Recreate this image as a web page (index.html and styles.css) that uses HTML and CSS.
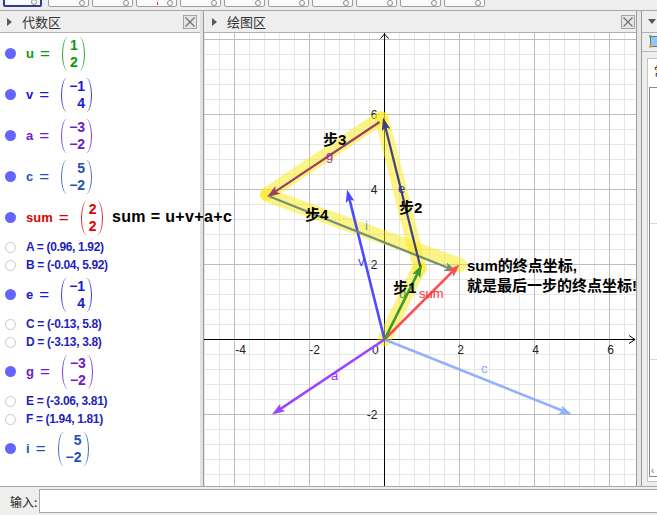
FILE: index.html
```html
<!DOCTYPE html>
<html lang="zh">
<head>
<meta charset="utf-8">
<title>GeoGebra</title>
<link rel="stylesheet" href="styles.css">
</head>
<body>
<div class="app">
  <div class="toolbar">
    <div class="tool sel"></div>
    <div class="tool"></div>
    <div class="tool"></div>
    <div class="tool mark"></div>
    <div class="tool"></div>
    <div class="tool"></div>
    <div class="tool"></div>
    <div class="tool"></div>
    <div class="tool"></div>
    <div class="tool"></div>
    <div class="tool"></div>
  </div>

  <div class="main">
    <section class="algebra">
      <div class="phead">
        <span class="tri"></span><span class="ptitle">代数区</span>
        <svg class="close" width="14" height="14" viewBox="0 0 14 14"><rect x="0.5" y="0.5" width="13" height="13" fill="#e4e4e4" stroke="#a4a4a4"/><path d="M2.5 2.5L11.5 11.5M11.5 2.5L2.5 11.5" stroke="#6e6e6e" stroke-width="1.1"/></svg>
      </div>
      <div class="alist">
        <div class="row vec c-u"><span class="dot"></span><span class="nm">u</span><span class="eq">=</span><span class="mat"><span>1</span><span>2</span></span></div>
        <div class="row vec c-v"><span class="dot"></span><span class="nm">v</span><span class="eq">=</span><span class="mat"><span>−1</span><span>4</span></span></div>
        <div class="row vec c-a"><span class="dot"></span><span class="nm">a</span><span class="eq">=</span><span class="mat"><span>−3</span><span>−2</span></span></div>
        <div class="row vec c-c"><span class="dot"></span><span class="nm">c</span><span class="eq">=</span><span class="mat"><span>5</span><span>−2</span></span></div>
        <div class="row vec c-sum"><span class="dot"></span><span class="nm">sum</span><span class="eq">=</span><span class="mat"><span>2</span><span>2</span></span></div>
        <div class="row pt"><span class="ring"></span><span class="ptxt">A = (0.96, 1.92)</span></div>
        <div class="row pt"><span class="ring"></span><span class="ptxt">B = (-0.04, 5.92)</span></div>
        <div class="row vec c-v"><span class="dot"></span><span class="nm">e</span><span class="eq">=</span><span class="mat"><span>−1</span><span>4</span></span></div>
        <div class="row pt"><span class="ring"></span><span class="ptxt">C = (-0.13, 5.8)</span></div>
        <div class="row pt"><span class="ring"></span><span class="ptxt">D = (-3.13, 3.8)</span></div>
        <div class="row vec c-a"><span class="dot"></span><span class="nm">g</span><span class="eq">=</span><span class="mat"><span>−3</span><span>−2</span></span></div>
        <div class="row pt"><span class="ring"></span><span class="ptxt">E = (-3.06, 3.81)</span></div>
        <div class="row pt"><span class="ring"></span><span class="ptxt">F = (1.94, 1.81)</span></div>
        <div class="row vec c-c"><span class="dot"></span><span class="nm">i</span><span class="eq">=</span><span class="mat"><span>5</span><span>−2</span></span></div>
      </div>
    </section>

    <div class="split"></div>

    <section class="graphics">
      <div class="phead gphead">
        <span class="tri"></span><span class="ptitle">绘图区</span>
        <svg class="close" width="14" height="14" viewBox="0 0 14 14"><rect x="0.5" y="0.5" width="13" height="13" fill="#e4e4e4" stroke="#a4a4a4"/><path d="M2.5 2.5L11.5 11.5M11.5 2.5L2.5 11.5" stroke="#6e6e6e" stroke-width="1.1"/></svg>
      </div>
      <div class="canvas">
        <svg class="plot" width="432" height="453" viewBox="0 0 432 453" xmlns="http://www.w3.org/2000/svg">
          <defs>
            <pattern id="gmin" x="0" y="6" width="15" height="15" patternUnits="userSpaceOnUse"><path d="M0.5 0V15M0 0.5H15" stroke="#e6e6e6" fill="none"/></pattern>
            <pattern id="gmaj" x="30" y="6" width="75" height="75" patternUnits="userSpaceOnUse"><path d="M0.5 0V75M0 0.5H75" stroke="#bdbdbd" fill="none"/></pattern>
            <marker id="m-u" viewBox="0 0 13 9" refX="9" refY="4.5" markerWidth="13" markerHeight="9" markerUnits="userSpaceOnUse" orient="auto"><path d="M0 0L13 4.5L0 9L3 4.5z" fill="#3a9a32"/></marker>
            <marker id="m-sum" viewBox="0 0 13 9" refX="9" refY="4.5" markerWidth="13" markerHeight="9" markerUnits="userSpaceOnUse" orient="auto"><path d="M0 0L13 4.5L0 9L3 4.5z" fill="#ff4d4d"/></marker>
            <marker id="m-v" viewBox="0 0 13 9" refX="9" refY="4.5" markerWidth="13" markerHeight="9" markerUnits="userSpaceOnUse" orient="auto"><path d="M0 0L13 4.5L0 9L3 4.5z" fill="#4a4aff"/></marker>
            <marker id="m-a" viewBox="0 0 13 9" refX="9" refY="4.5" markerWidth="13" markerHeight="9" markerUnits="userSpaceOnUse" orient="auto"><path d="M0 0L13 4.5L0 9L3 4.5z" fill="#9a44ff"/></marker>
            <marker id="m-c" viewBox="0 0 13 9" refX="9" refY="4.5" markerWidth="13" markerHeight="9" markerUnits="userSpaceOnUse" orient="auto"><path d="M0 0L13 4.5L0 9L3 4.5z" fill="#8fb2ff"/></marker>
            <marker id="m-e" viewBox="0 0 13 9" refX="9" refY="4.5" markerWidth="13" markerHeight="9" markerUnits="userSpaceOnUse" orient="auto"><path d="M0 0L13 4.5L0 9L3 4.5z" fill="#3f3f7e"/></marker>
            <marker id="m-g" viewBox="0 0 13 9" refX="9" refY="4.5" markerWidth="13" markerHeight="9" markerUnits="userSpaceOnUse" orient="auto"><path d="M0 0L13 4.5L0 9L3 4.5z" fill="#9a3f66"/></marker>
            <marker id="m-i" viewBox="0 0 13 9" refX="9" refY="4.5" markerWidth="13" markerHeight="9" markerUnits="userSpaceOnUse" orient="auto"><path d="M0 0L13 4.5L0 9L3 4.5z" fill="#6f9078"/></marker>
          </defs>

          <rect width="432" height="453" fill="#ffffff"/>
          <rect width="432" height="453" fill="url(#gmin)"/>
          <rect width="432" height="453" fill="url(#gmaj)"/>

          <!-- axes -->
          <path d="M0 306.5H431M180.5 0V453" stroke="#000" stroke-width="1" fill="none"/>
          <path d="M425 302.5L431 306.5L425 310.5" stroke="#000" stroke-width="1" fill="none"/>
          <path d="M176.5 5.5L180.5 1L184.5 5.5" stroke="#000" stroke-width="1" fill="none"/>

          <g class="axnum">
            <text x="42" y="321" text-anchor="end">-4</text>
            <text x="116" y="321" text-anchor="end">-2</text>
            <text x="168" y="321">0</text>
            <text x="256.5" y="321" text-anchor="middle">2</text>
            <text x="331.5" y="321" text-anchor="middle">4</text>
            <text x="406.5" y="321" text-anchor="middle">6</text>
            <text x="173.5" y="85.5" text-anchor="end">6</text>
            <text x="173.5" y="160.5" text-anchor="end">4</text>
            <text x="173.5" y="236" text-anchor="end">2</text>
            <text x="173.5" y="385.5" text-anchor="end">-2</text>
          </g>

          <!-- highlight steps -->
          <g stroke="#fbea10" stroke-opacity="0.5" stroke-width="14" stroke-linecap="round" fill="none">
            <line x1="180.5" y1="306.5" x2="215" y2="235"/>
            <line x1="216" y1="236" x2="178" y2="86"/>
            <line x1="177" y1="85" x2="63" y2="161"/>
            <line x1="63" y1="162" x2="256" y2="232"/>
          </g>

          <!-- vectors -->
          <g stroke-width="2.6" fill="none">
            <line x1="180.5" y1="306.5" x2="364.3" y2="380" stroke="#8fb2ff" marker-end="url(#m-c)"/>
            <line x1="180.5" y1="306.5" x2="71.3" y2="379.3" stroke="#9a44ff" marker-end="url(#m-a)"/>
            <line x1="180.5" y1="306.5" x2="144" y2="160.4" stroke="#4a4aff" marker-end="url(#m-v)"/>
            <line x1="65.75" y1="163.6" x2="249.5" y2="237.1" stroke="#6f9078" stroke-width="2.2" marker-end="url(#m-i)"/>
            <line x1="175.6" y1="89" x2="66.4" y2="161.8" stroke="#9a3f66" stroke-width="2.2" marker-end="url(#m-g)"/>
            <line x1="216.5" y1="234.5" x2="180" y2="88.4" stroke="#3f3f7e" stroke-width="2.2" marker-end="url(#m-e)"/>
            <line x1="180.5" y1="306.5" x2="252.7" y2="234.3" stroke="#ff4d4d" marker-end="url(#m-sum)"/>
            <line x1="180.5" y1="306.5" x2="216.2" y2="235.1" stroke="#3a9a32" marker-end="url(#m-u)"/>
          </g>

          <!-- vector labels -->
          <g class="vlab">
            <text x="195" y="265" fill="#33a02c">u</text>
            <text x="215" y="265" fill="#ff3030">sum</text>
            <text x="154" y="233" fill="#4040ff">v</text>
            <text x="161" y="197" fill="#5aa3a3">i</text>
            <text x="194" y="160" fill="#3333aa">e</text>
            <text x="122" y="127" fill="#9a33aa">g</text>
            <text x="127" y="347" fill="#9933ff">a</text>
            <text x="277" y="340" fill="#80a8ff" font-size="12">c</text>
          </g>

          <!-- step texts -->
          <g class="step">
            <text x="119" y="111.5">步3</text>
            <text x="195" y="179.5">步2</text>
            <text x="101" y="186.5">步4</text>
            <text x="189" y="259.5">步1</text>
            <text x="263" y="237.5">sum的终点坐标,</text>
            <text x="263" y="258">就是最后一步的终点坐标!</text>
          </g>
        </svg>
      </div>
    </section>

    <div class="split2"></div>

    <section class="side">
      <div class="shead"><span class="dtri"></span></div>
      <div class="stool"><span class="sicon"></span></div>
      <div class="sbody">
        <div class="spanel">
          <div class="stab">常</div>
          <div class="sbox"><div class="scell"></div><div class="scell"></div><div class="scell last"><span class="sarrow">‹</span></div></div>
        </div>
      </div>
    </section>
  </div>

  <div class="inputbar">
    <span class="ilabel">输入:</span>
    <div class="field"></div>
  </div>

  <div class="note">sum = u+v+a+c</div>
</div>
</body>
</html>
```

FILE: styles.css
```css
* { box-sizing: border-box; }

html, body {
  margin: 0;
  padding: 0;
}

body {
  background: #eeeeee;
  font-family: "Liberation Sans", "Noto Sans CJK SC", sans-serif;
}

.app {
  position: relative;
  width: 657px;
  height: 515px;
  display: flex;
  flex-direction: column;
  overflow: hidden;
}

/* ---------- toolbar ---------- */
.toolbar {
  flex: none;
  height: 11px;
  border-bottom: 1px solid #a8a8a8;
  background: #eeeeee;
  display: flex;
  align-items: flex-end;
  gap: 3px;
  padding-left: 3px;
  overflow: hidden;
}

.tool {
  flex: none;
  position: relative;
  width: 41px;
  height: 30px;
  margin-bottom: 3px;
  border: 1px solid #9c9c9c;
  border-radius: 2px;
  background: #fafafa;
}

.tool::after {
  content: "";
  position: absolute;
  right: 3px;
  bottom: 0;
  width: 4px;
  height: 4px;
  border: 1px solid #8a8a8a;
  border-radius: 50%;
  background: #fff;
}

.tool.sel {
  width: 39px;
  margin-right: 3px;
  border: 2px solid #2b3d9c;
}

.tool.mark::before {
  content: "";
  position: absolute;
  left: 20px;
  bottom: 1px;
  width: 1px;
  height: 3px;
  background: #e03030;
}

/* ---------- main ---------- */
.main {
  flex: 1;
  min-height: 0;
  display: flex;
}

.phead {
  flex: none;
  height: 22px;
  border-bottom: 1px solid #b0b0b0;
  background: #eeeeee;
  display: flex;
  align-items: center;
  padding-left: 7px;
}

.gphead {
  padding-left: 8px;
}

.tri {
  width: 0;
  height: 0;
  border-left: 5px solid #5a5a5a;
  border-top: 4.5px solid transparent;
  border-bottom: 4.5px solid transparent;
  margin-right: 10px;
}

.ptitle {
  font-family: "Noto Sans CJK SC", sans-serif;
  font-size: 13px;
  color: #333333;
  line-height: 1;
}

.close {
  display: block;
  margin-left: auto;
  margin-right: 3px;
}

.gphead .close {
  margin-right: 1px;
}

/* ---------- algebra ---------- */
.algebra {
  flex: none;
  width: 200px;
  background: #ffffff;
  display: flex;
  flex-direction: column;
}

.alist {
  flex: 1;
}

.row {
  display: flex;
  align-items: center;
  padding-left: 5px;
}

.row.vec {
  height: 41px;
}

.row.pt {
  height: 18px;
}

.dot {
  flex: none;
  width: 11px;
  height: 11px;
  border-radius: 50%;
  background: #6464ff;
  margin-right: 10px;
}

.ring {
  flex: none;
  width: 11px;
  height: 11px;
  border: 1.5px solid #c8c8c8;
  border-radius: 50%;
  background: #fff;
  margin-right: 10px;
}

.nm {
  font-weight: bold;
  font-size: 13px;
}

.eq {
  font-size: 17px;
  line-height: 1;
  margin: 0 12px 0 6px;
}

.mat {
  position: relative;
  display: inline-grid;
  justify-items: end;
  font-weight: bold;
  font-size: 14px;
  line-height: 17px;
  padding: 0 7px 0 8px;
}

.mat::before,
.mat::after {
  content: "";
  position: absolute;
  top: 0;
  bottom: 0;
  width: 6px;
  opacity: 0.85;
}

.mat::before {
  left: 0;
  border-left: 1.3px solid currentColor;
  border-radius: 6px 0 0 6px / 17px 0 0 17px;
}

.mat::after {
  right: 0;
  border-right: 1.3px solid currentColor;
  border-radius: 0 6px 6px 0 / 0 17px 17px 0;
}

.ptxt {
  font-weight: bold;
  font-size: 12px;
  letter-spacing: -0.35px;
  color: #1f1fbf;
}

.c-u { color: #0b990b; }
.c-v { color: #1a1ad6; }
.c-a { color: #6a20cc; }
.c-c { color: #2152b8; }
.c-sum { color: #e00000; }

/* ---------- splits ---------- */
.split {
  flex: none;
  width: 3px;
  background: #e2e2e2;
}

.split2 {
  flex: none;
  width: 4px;
  background: #e6e6e6;
}

/* ---------- graphics ---------- */
.graphics {
  flex: none;
  width: 434px;
  border-left: 1px solid #9a9a9a;
  border-right: 1px solid #9a9a9a;
  background: #ffffff;
  display: flex;
  flex-direction: column;
}

.canvas {
  flex: 1;
  overflow: hidden;
}

.plot {
  display: block;
}

.axnum text {
  font-family: "Liberation Sans", sans-serif;
  font-size: 12px;
  fill: #222222;
}

.vlab text {
  font-family: "Liberation Sans", sans-serif;
  font-size: 13px;
}

.step text {
  font-family: "Liberation Sans", "Noto Sans CJK SC", sans-serif;
  font-size: 15px;
  font-weight: bold;
  fill: #000000;
}

/* ---------- side panel ---------- */
.side {
  flex: none;
  width: 16px;
  border-left: 1px solid #9a9a9a;
  background: #eeeeee;
  display: flex;
  flex-direction: column;
}

.shead {
  flex: none;
  height: 22px;
  border-bottom: 1px solid #b0b0b0;
  display: flex;
  align-items: center;
  padding-left: 6px;
}

.dtri {
  width: 0;
  height: 0;
  border-top: 5px solid #5a5a5a;
  border-left: 4px solid transparent;
  border-right: 4px solid transparent;
}

.stool {
  flex: none;
  height: 19px;
  border-bottom: 1px solid #b8b8b8;
  padding: 3px 0 0 8px;
}

.sicon {
  position: relative;
  display: block;
  width: 12px;
  height: 11px;
  background: #9cc4e6;
  border: 1px solid #4a7ab0;
}

.sicon::before,
.sicon::after {
  content: "";
  position: absolute;
  left: -2px;
  width: 3px;
  height: 3px;
  border-radius: 50%;
}

.sicon::before {
  top: -2px;
  background: #4caf50;
}

.sicon::after {
  bottom: -2px;
  background: #e0b000;
}

.sbody {
  flex: 1;
  padding: 6px 0 4px 5px;
  display: flex;
}

.spanel {
  flex: 1;
  background: #ffffff;
  border-left: 1px solid #c4c4c4;
  border-top: 1px solid #c4c4c4;
  border-bottom: 1px solid #c4c4c4;
  padding: 0 0 4px 1px;
  display: flex;
  flex-direction: column;
}

.stab {
  flex: none;
  height: 28px;
  padding: 3px 0 0 5px;
  font-family: "Noto Sans CJK SC", sans-serif;
  font-size: 12px;
  color: #222;
  white-space: nowrap;
  overflow: hidden;
}

.sbox {
  flex: 1;
  border: 1px solid #8c8c8c;
  border-right: none;
  background: #ffffff;
  display: flex;
  flex-direction: column;
}

.scell {
  height: 136px;
  border-bottom: 1px solid #d8d8d8;
}

.scell.last {
  flex: 1;
  border-bottom: none;
  display: flex;
  align-items: flex-end;
}

.sarrow {
  font-size: 10px;
  color: #777;
  padding-left: 1px;
}

/* ---------- input bar ---------- */
.inputbar {
  flex: none;
  height: 29px;
  border-top: 1px solid #a8a8a8;
  background: #eeeeee;
  display: flex;
  align-items: center;
  padding-left: 10px;
}

.ilabel {
  font-family: "Noto Sans CJK SC", sans-serif;
  font-size: 12px;
  color: #222;
}

.field {
  flex: 1;
  height: 24px;
  margin-left: 2px;
  margin-right: -4px;
  background: #ffffff;
  border: 1px solid #a8a8a8;
}

/* ---------- overlay text ---------- */
.note {
  position: absolute;
  left: 112px;
  top: 207px;
  font-family: "Liberation Sans", sans-serif;
  font-weight: bold;
  font-size: 16px;
  line-height: 20px;
  letter-spacing: 0.35px;
  color: #000000;
  white-space: nowrap;
}
```
